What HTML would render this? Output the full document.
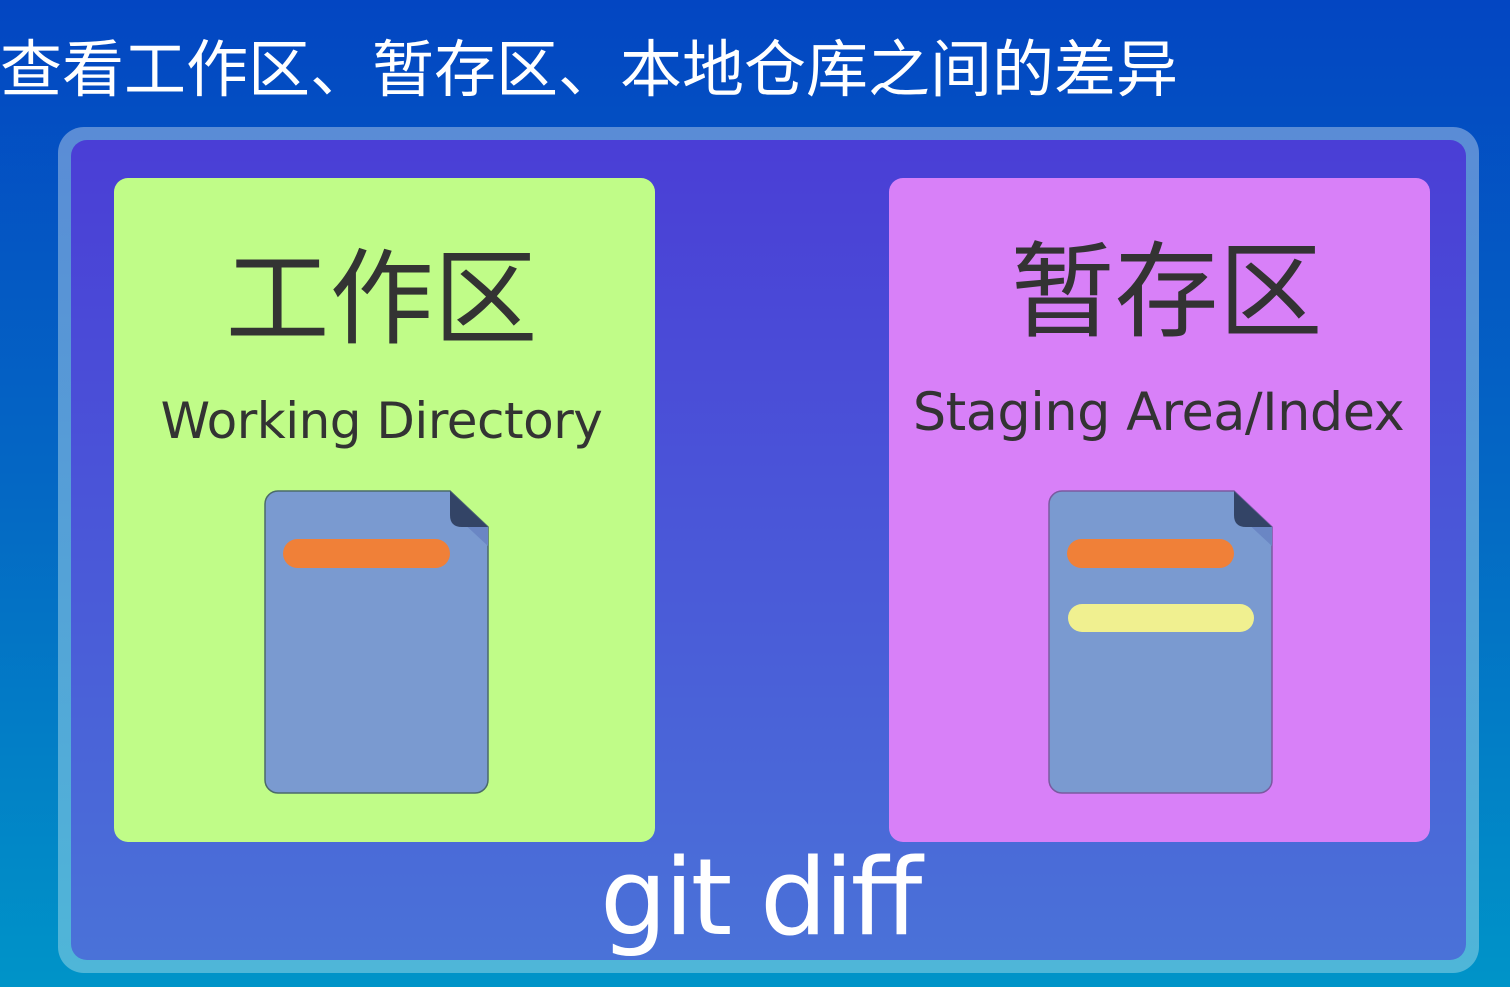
<!DOCTYPE html>
<html><head><meta charset="utf-8"><style>
*{margin:0;padding:0;box-sizing:border-box}
body{width:1510px;height:987px;overflow:hidden;position:relative;background:linear-gradient(180deg,#0346c2 0%,#0468c4 50%,#0094c8 100%);font-family:"Liberation Sans","Noto Sans CJK SC",sans-serif}
.title{position:absolute;left:0;top:31px;font-size:62px;line-height:80px;color:#fff;white-space:nowrap;letter-spacing:0px}
.outer{position:absolute;left:58px;top:127px;width:1421px;height:846px;border-radius:26px;background:linear-gradient(180deg,#5a8cd6,#4fb6d8);}
.inner{position:absolute;left:71px;top:140px;width:1395px;height:820px;border-radius:16px;background:linear-gradient(180deg,#4a3ed6 0%,#4a58d8 50%,#4a72d8 100%)}
.card{position:absolute;top:178px;width:541px;height:664px;border-radius:14px}
.g{left:114px;background:#c0fc88}
.p{left:889px;background:#d880f8}
.big{position:absolute;left:0;right:0;text-align:center;font-size:104px;color:#333;line-height:120px}
.en{position:absolute;left:0;right:0;text-align:center;font-size:50px;color:#333;line-height:60px;font-family:"DejaVu Sans","Liberation Sans",sans-serif;letter-spacing:-0.5px}
.file{position:absolute;top:490px}
.git{position:absolute;left:600px;top:838px;font-size:106px;color:#fff;line-height:120px;font-family:"DejaVu Sans","Liberation Sans",sans-serif;letter-spacing:-3px}
</style></head><body>
<div class="title">查看工作区、暂存区、本地仓库之间的差异</div>
<div class="outer"></div>
<div class="inner"></div>
<div class="card g"><div class="big" style="top:62px;left:-6px">工作区</div><div class="en" style="top:213px;left:-6px">Working Directory</div></div>
<div class="card p"><div class="big" style="top:55px;left:14px">暂存区</div><div class="en" style="top:205px;font-size:52.5px;left:-2px">Staging Area/Index</div></div>
<svg class="file" style="left:264px" width="226" height="305" viewBox="0 0 226 305">
<path d="M14 1 H186 L224 37 V290 a13 13 0 0 1 -13 13 H14 a13 13 0 0 1 -13 -13 V14 a13 13 0 0 1 13 -13Z" fill="#7a9ad0" stroke="#4a6a6a" stroke-width="1.5"/>
<path d="M186 1 L224 37 V56 L196 30 Q186 28 186 18Z" fill="#6a86c4"/>
<path d="M186 1 L224 37 H198 Q186 37 186 25Z" fill="#334466"/>
<rect x="19" y="49" width="167" height="29" rx="14.5" fill="#f08038"/>
</svg>
<svg class="file" style="left:1048px" width="226" height="305" viewBox="0 0 226 305">
<path d="M14 1 H186 L224 37 V290 a13 13 0 0 1 -13 13 H14 a13 13 0 0 1 -13 -13 V14 a13 13 0 0 1 13 -13Z" fill="#7a9ad0" stroke="#7a5aa0" stroke-width="1.5"/>
<path d="M186 1 L224 37 V56 L196 30 Q186 28 186 18Z" fill="#6a86c4"/>
<path d="M186 1 L224 37 H198 Q186 37 186 25Z" fill="#334466"/>
<rect x="19" y="49" width="167" height="29" rx="14.5" fill="#f08038"/>
<rect x="20" y="114" width="186" height="28" rx="14" fill="#f0f090"/>
</svg>
<div class="git">git diff</div>
</body></html>
